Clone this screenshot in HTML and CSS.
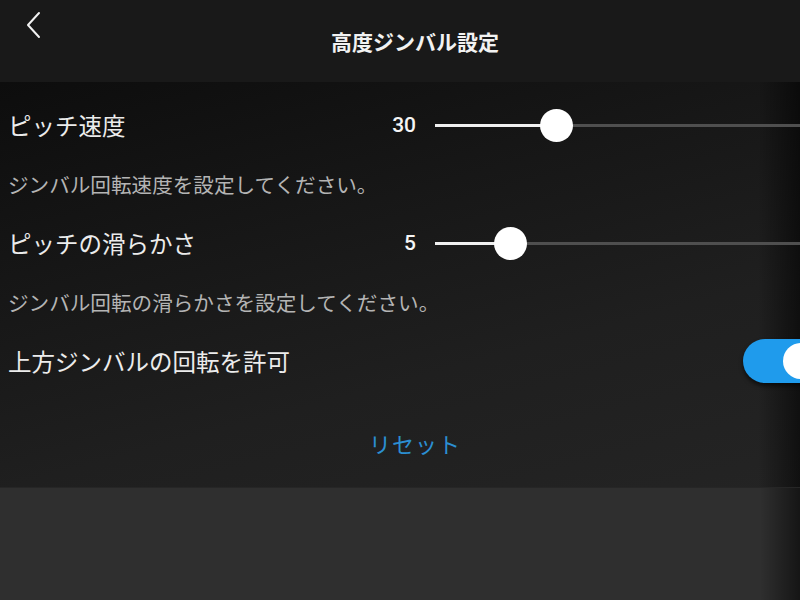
FILE: index.html
```html
<!DOCTYPE html>
<html lang="ja">
<head>
    <meta charset="UTF-8">
    <meta name="viewport" content="width=device-width, initial-scale=1.0">
    <title>高度ジンバル設定</title>
    <link rel="stylesheet" href="styles.css">
</head>
<body>
    <div class="screen">
        <header class="top-bar">
            <button class="back-button" aria-label="戻る">
                <svg width="18" height="28" viewBox="0 0 18 28">
                    <path d="M14 2 L3 14 L14 26" fill="none" stroke="#f2f2f2" stroke-width="2" stroke-linecap="round" stroke-linejoin="round"/>
                </svg>
            </button>
            <h1 class="title">高度ジンバル設定</h1>
        </header>

        <main class="settings">
            <div class="setting-row">
                <span class="setting-label">ピッチ速度</span>
                <span class="setting-value">30</span>
                <div class="slider">
                    <div class="slider-fill" style="width: 30.6%"></div>
                    <div class="slider-thumb" style="left: 30.6%"></div>
                </div>
            </div>
            <p class="setting-desc">ジンバル回転速度を設定してください。</p>

            <div class="setting-row">
                <span class="setting-label">ピッチの滑らかさ</span>
                <span class="setting-value">5</span>
                <div class="slider">
                    <div class="slider-fill" style="width: 19%"></div>
                    <div class="slider-thumb" style="left: 19%"></div>
                </div>
            </div>
            <p class="setting-desc">ジンバル回転の滑らかさを設定してください。</p>

            <div class="setting-row">
                <span class="setting-label">上方ジンバルの回転を許可</span>
                <div class="toggle on">
                    <div class="toggle-knob"></div>
                </div>
            </div>

            <div class="reset-wrap">
                <button class="reset-button">リセット</button>
            </div>
        </main>

        <div class="bottom-area"></div>
    </div>
</body>
</html>
```

FILE: styles.css
```css
html, body {
    margin: 0;
    padding: 0;
    height: 100%;
    overflow: hidden;
}

body {
    background-color: #2f2f2f;
    font-family: "Noto Sans CJK JP", "Noto Sans", sans-serif;
    color: #ededed;
}

.screen {
    width: 830px;
    height: 600px;
    display: flex;
    flex-direction: column;
}

.top-bar {
    height: 82px;
    background-color: #191919;
    display: flex;
    align-items: center;
    justify-content: center;
    position: relative;
    flex-shrink: 0;
}

.back-button {
    position: absolute;
    left: 25px;
    top: 11px;
    padding: 0;
    border: none;
    background: none;
    display: block;
}

.back-button svg {
    display: block;
}

.title {
    margin: 0;
    font-size: 21px;
    font-weight: 700;
    color: #f2f2f2;
}

.settings {
    height: 405px;
    flex-shrink: 0;
    padding-top: 13px;
    box-sizing: border-box;
    background:
        linear-gradient(to right, rgba(0, 0, 0, 0) 0, rgba(0, 0, 0, 0) 758px, rgba(0, 0, 0, 0.55) 800px),
        linear-gradient(165deg, #0d0d0d 0%, #171717 35%, #1f1f1f 65%, #242424 100%);
}

.setting-row {
    height: 60px;
    display: flex;
    align-items: center;
    padding-left: 8px;
}

.setting-label {
    flex: 1;
    font-size: 23.5px;
    color: #ececec;
    white-space: nowrap;
}

.setting-value {
    width: 60px;
    margin-right: 19px;
    text-align: right;
    font-family: Roboto, "Liberation Sans", sans-serif;
    font-weight: 500;
    font-size: 21px;
    color: #f5f5f5;
}

.slider {
    width: 395px;
    height: 3px;
    background-color: #4f4f4f;
    position: relative;
}

.slider-fill {
    height: 100%;
    background-color: #f0f0f0;
}

.slider-thumb {
    position: absolute;
    top: 50%;
    width: 33px;
    height: 33px;
    margin-left: -16px;
    margin-top: -16px;
    border-radius: 50%;
    background-color: #ffffff;
}

.setting-desc {
    margin: 0;
    height: 58px;
    line-height: 58px;
    padding-left: 8px;
    font-size: 20.6px;
    color: #b4b4b4;
    white-space: nowrap;
}

.toggle {
    width: 80px;
    height: 44px;
    margin-right: 7px;
    border-radius: 22px;
    background-color: #1f9bec;
    position: relative;
    box-shadow: 0 3px 4px rgba(0, 0, 0, 0.6);
}

.toggle-knob {
    position: absolute;
    top: 4px;
    right: 4px;
    width: 36px;
    height: 36px;
    border-radius: 50%;
    background-color: #ffffff;
}

.reset-wrap {
    height: 96px;
    display: flex;
    align-items: center;
    justify-content: center;
    padding-top: 8px;
    box-sizing: border-box;
}

.reset-button {
    border: none;
    background: none;
    padding: 0;
    font-family: "Noto Sans CJK JP", sans-serif;
    font-size: 22px;
    color: #2b8fd2;
    letter-spacing: 1px;
}

.bottom-area {
    flex: 1;
    background:
        linear-gradient(to right, rgba(0, 0, 0, 0) 0, rgba(0, 0, 0, 0) 760px, rgba(0, 0, 0, 0.55) 800px),
        #2f2f2f;
    border-top: 1px solid #262626;
}
```
